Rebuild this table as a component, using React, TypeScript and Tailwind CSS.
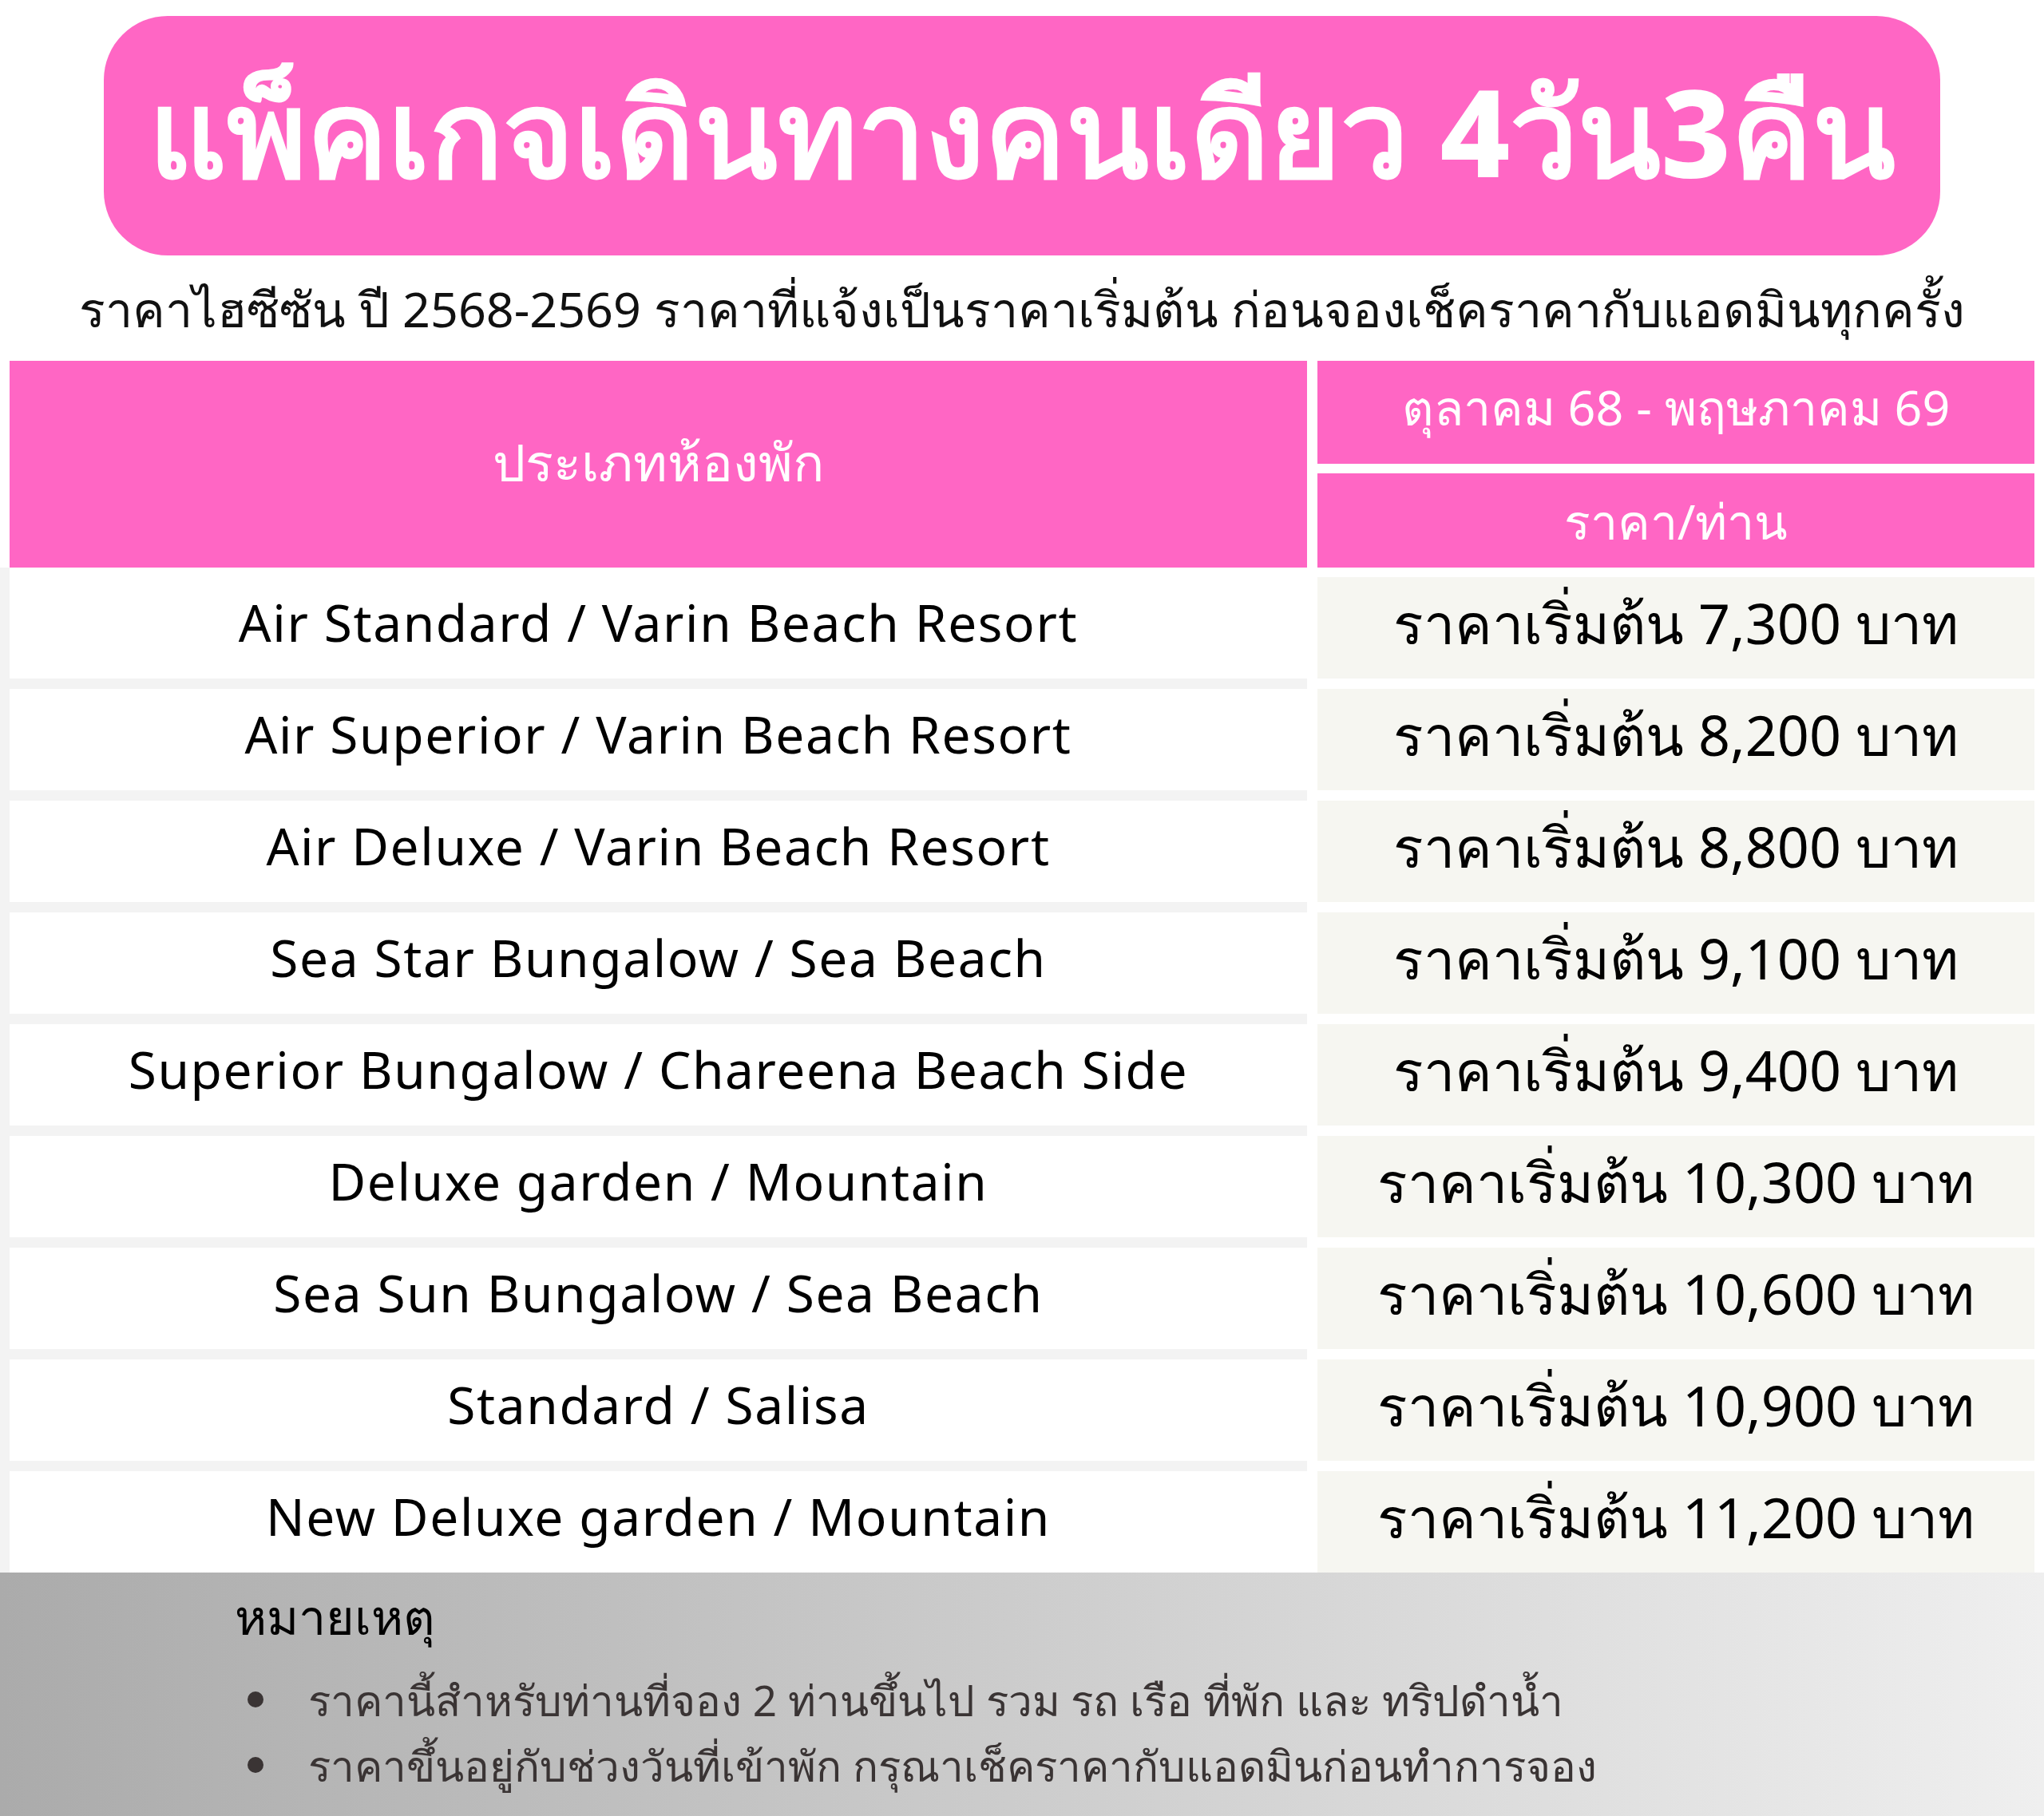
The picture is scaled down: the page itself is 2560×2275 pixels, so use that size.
const rooms = [
  { name: "Air Standard / Varin Beach Resort", price: "7,300" },
  { name: "Air Superior / Varin Beach Resort", price: "8,200" },
  { name: "Air Deluxe / Varin Beach Resort", price: "8,800" },
  { name: "Sea Star Bungalow / Sea Beach", price: "9,100" },
  { name: "Superior Bungalow / Chareena Beach Side", price: "9,400" },
  { name: "Deluxe garden / Mountain", price: "10,300" },
  { name: "Sea Sun Bungalow / Sea Beach", price: "10,600" },
  { name: "Standard / Salisa", price: "10,900" },
  { name: "New Deluxe garden / Mountain", price: "11,200" },
];

const notes = [
  "ราคานี้สำหรับท่านที่จอง 2 ท่านขึ้นไป รวม รถ เรือ ที่พัก และ ทริปดำน้ำ",
  "ราคาขึ้นอยู่กับช่วงวันที่เข้าพัก กรุณาเช็คราคากับแอดมินก่อนทำการจอง",
];

const App = () => {
  return (
    <div className="w-[2560px] h-[2275px] bg-white overflow-hidden font-['Noto_Sans',sans-serif]">
      {/* Title */}
      <div className="pt-[20px] px-[130px]">
        <div className="h-[300px] rounded-[80px] bg-[#ff66c4] flex items-center justify-center pb-[12px]">
          <h1 className="text-white text-[152px] font-extrabold leading-none">
            แพ็คเกจเดินทางคนเดียว 4วัน3คืน
          </h1>
        </div>
      </div>

      {/* Subtitle */}
      <div className="h-[132px] flex items-center justify-center">
        <p className="text-[61px] text-[#111] leading-none">
          ราคาไฮซีซัน ปี 2568-2569 ราคาที่แจ้งเป็นราคาเริ่มต้น ก่อนจองเช็คราคากับแอดมินทุกครั้ง
        </p>
      </div>

      {/* Header */}
      <div className="flex h-[259px]">
        <div className="ml-[12px] w-[1625px] bg-[#ff66c4] flex items-center justify-center pb-[6px]">
          <span className="text-white text-[65px] leading-none">ประเภทห้องพัก</span>
        </div>
        <div className="ml-[13px] w-[898px] flex flex-col gap-[12px]">
          <div className="h-[129px] bg-[#ff66c4] flex items-center justify-center pb-[14px]">
            <span className="text-white text-[61px] leading-none">ตุลาคม 68 - พฤษภาคม 69</span>
          </div>
          <div className="flex-1 bg-[#ff66c4] flex items-center justify-center">
            <span className="text-white text-[61px] leading-none">ราคา/ท่าน</span>
          </div>
        </div>
      </div>

      {/* Rows */}
      <div className="flex">
        <div className="w-[1637px] bg-[#f3f3f3] pl-[12px] flex flex-col gap-[13px]">
          {rooms.map((r, i) => (
            <div
              key={r.name}
              className={`bg-white flex items-center justify-center pb-[14px] ${i === 0 ? "h-[139px] pt-[12px]" : "h-[127px]"}`}
            >
              <span className="text-[64px] text-black leading-none tracking-[0.025em]">{r.name}</span>
            </div>
          ))}
        </div>
        <div className="ml-[13px] w-[898px] pt-[12px] flex flex-col gap-[13px]">
          {rooms.map((r) => (
            <div key={r.price} className="h-[127px] bg-[#f6f6f1] flex items-center justify-center pb-[14px]">
              <span className="text-[70px] text-black leading-none">ราคาเริ่มต้น {r.price} บาท</span>
            </div>
          ))}
        </div>
      </div>

      {/* Notes */}
      <div className="h-[305px] bg-gradient-to-r from-[#ababab] to-[#efefef] pl-[294px] pt-[14px]">
        <div className="text-[61px] text-black leading-none h-[80px] flex items-center">หมายเหตุ</div>
        <ul className="mt-[36px] flex flex-col gap-[24px]">
          {notes.map((n) => (
            <li key={n} className="flex items-center text-[53px] text-[#3a3434] leading-none h-[58px]">
              <span className="w-[20px] h-[20px] rounded-full bg-[#3a3434] ml-[16px] mr-[56px]" />
              {n}
            </li>
          ))}
        </ul>
      </div>
    </div>
  );
};

export default App;
